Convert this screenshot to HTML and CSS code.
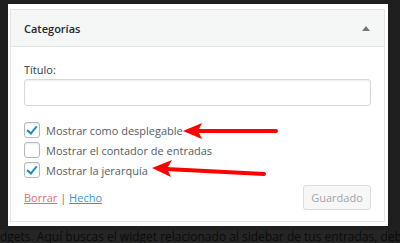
FILE: index.html
```html
<!DOCTYPE html>
<html lang="es">
<head>
    <meta charset="UTF-8">
    <title>Widget Categorías</title>
    <link rel="stylesheet" href="styles.css">
</head>
<body>
    <div class="screen">
        <div class="panel">
            <div class="widget">
                <div class="widget-top">
                    <span class="widget-title">Categorías</span>
                    <span class="widget-toggle"></span>
                </div>
                <div class="widget-inside">
                    <label class="field-label" for="title">Título:</label>
                    <input type="text" id="title" class="field-input">

                    <div class="options">
                        <label class="option"><span class="check checked"></span>Mostrar como desplegable</label>
                        <label class="option"><span class="check"></span>Mostrar el contador de entradas</label>
                        <label class="option"><span class="check checked"></span>Mostrar la jerarquía</label>
                    </div>

                    <div class="actions">
                        <div class="links">
                            <a href="#" class="link-delete">Borrar</a> <span class="sep">|</span> <a href="#" class="link-done">Hecho</a>
                        </div>
                        <button class="save-button" disabled>Guardado</button>
                    </div>
                </div>
            </div>
        </div>
        <p class="behind-text">dgets. Aquí buscas el widget relacionado al sidebar de tus entradas, deb</p>
    </div>

    <!-- annotation arrows drawn over the screenshot -->
    <svg class="annotations" width="400" height="243" viewBox="0 0 400 243">
        <line x1="276" y1="131" x2="196" y2="131" stroke="#f00" stroke-width="4" stroke-linecap="round"/>
        <polygon points="183,131 202,123 198,131 202,139" fill="#f00"/>
        <line x1="264" y1="174" x2="166" y2="169" stroke="#f00" stroke-width="4" stroke-linecap="round"/>
        <polygon points="152,168 172,160 167,168.5 171,177" fill="#f00"/>
    </svg>
</body>
</html>
```

FILE: styles.css
```css
body {
    margin: 0;
    height: 243px;
    overflow: hidden;
    background: #1f1f1f;
    font-family: 'Open Sans', sans-serif;
    position: relative;
}

.screen {
    padding: 4px 12px 0 8px;
}

.panel {
    background: #fff;
    padding: 5px 3px 4px 2px;
}

.widget {
    border: 1px solid #e2e4e7;
    background: #fff;
}

.widget-top {
    display: flex;
    align-items: center;
    justify-content: space-between;
    height: 36px;
    padding: 0 13px;
    background: #f5f6f6;
    border-bottom: 1px solid #e2e4e7;
}

.widget-title {
    font-size: 11px;
    font-weight: 600;
    color: #23282d;
}

.widget-toggle {
    width: 0;
    height: 0;
    border-left: 4px solid transparent;
    border-right: 4px solid transparent;
    border-bottom: 5px solid #72777c;
    margin-right: 1px;
}

.widget-inside {
    padding: 14px 13px 11px;
}

.field-label {
    display: block;
    font-size: 11px;
    line-height: 18px;
    color: #32373c;
}

.field-input {
    display: block;
    box-sizing: border-box;
    width: 100%;
    height: 27px;
    margin: 0;
    border: 1px solid #d6d8da;
    border-radius: 3px;
    box-shadow: inset 0 1px 2px rgba(0, 0, 0, 0.07);
    background: #fff;
}

.options {
    margin-top: 14px;
    display: flex;
    flex-direction: column;
}

.option {
    display: flex;
    align-items: center;
    height: 20px;
    font-size: 11px;
    color: #555d66;
}

.check {
    position: relative;
    box-sizing: border-box;
    width: 16px;
    height: 16px;
    margin-right: 6px;
    border: 1px solid #b4b9be;
    border-radius: 3px;
    background: #fff;
    box-shadow: inset 0 1px 2px rgba(0, 0, 0, 0.1);
}

.check.checked::after {
    content: '';
    position: absolute;
    left: 4px;
    top: 1px;
    width: 4px;
    height: 8px;
    border-right: 2px solid #1e8cbe;
    border-bottom: 2px solid #1e8cbe;
    transform: rotate(40deg);
}

.actions {
    display: flex;
    align-items: center;
    justify-content: space-between;
    margin-top: 5px;
}

.links {
    font-size: 11px;
    color: #72777c;
}

.link-delete {
    color: #e26d6d;
}

.link-done {
    color: #3c94d0;
}

.save-button {
    width: 68px;
    height: 25px;
    padding: 0;
    font-family: 'Open Sans', sans-serif;
    font-size: 11px;
    color: #a0a5aa;
    background: #f7f7f7;
    border: 1px solid #dddddd;
    border-radius: 3px;
}

.behind-text {
    margin: 4px 0 0 -8px;
    font-size: 12px;
    line-height: 14px;
    color: #0b0b0b;
    background: #252525;
    white-space: nowrap;
}

.annotations {
    position: absolute;
    top: 0;
    left: 0;
    pointer-events: none;
}
```
